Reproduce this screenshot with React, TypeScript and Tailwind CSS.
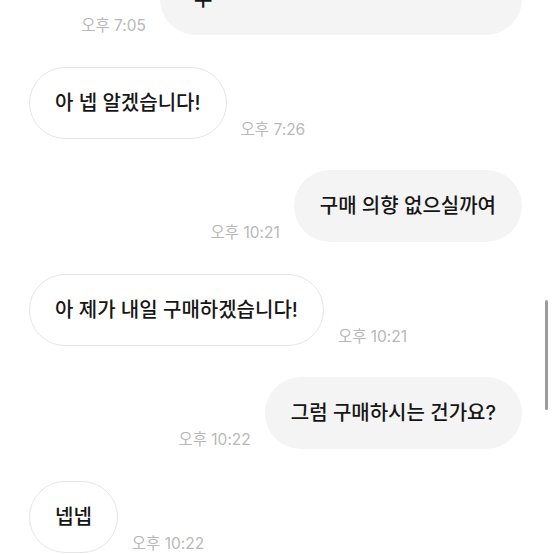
import React from "react";

// ---------------------------------------------------------------------------
// TYPES
// ---------------------------------------------------------------------------
interface Message {
  id: number;
  mine: boolean;
  lines: string[];
  time: string;
  width?: string;
}

// ---------------------------------------------------------------------------
// DATA
// ---------------------------------------------------------------------------
const MESSAGES: Message[] = [
  { id: 1, mine: true, lines: ["혹시 구매 생각 있으시면", "부"], time: "오후 7:05", width: "w-[362px]" },
  { id: 2, mine: false, lines: ["아 넵 알겠습니다!"], time: "오후 7:26" },
  { id: 3, mine: true, lines: ["구매 의향 없으실까여"], time: "오후 10:21" },
  { id: 4, mine: false, lines: ["아 제가 내일 구매하겠습니다!"], time: "오후 10:21" },
  { id: 5, mine: true, lines: ["그럼 구매하시는 건가요?"], time: "오후 10:22" },
  { id: 6, mine: false, lines: ["넵넵"], time: "오후 10:22" },
];

// Inter for digits / punctuation, Noto CJK for hangul
const FONT = "font-['Inter','Noto_Sans_CJK_KR',sans-serif]";

// ---------------------------------------------------------------------------
// COMPONENTS
// ---------------------------------------------------------------------------
const Time: React.FC<{ time: string }> = ({ time }) => (
  <span className="mb-[-1px] shrink-0 text-[15.5px] leading-[20px] text-[#b8b8b8] whitespace-nowrap">
    {time}
  </span>
);

const Bubble: React.FC<{ msg: Message }> = ({ msg }) => {
  const bubbleClass = msg.mine
    ? "bg-[#f4f4f4] rounded-[36px] px-[26px] py-[23px]"
    : "bg-white border border-[#e6e6e6] rounded-[36px] px-[25px] py-[22px]";

  return (
    <div className={`flex items-end gap-[14px] ${msg.mine ? "justify-end pr-[32px]" : "justify-start pl-[29px]"}`}>
      {msg.mine && <Time time={msg.time} />}
      <div
        className={`${bubbleClass} ${msg.width ?? ""} min-h-[72px] text-[20px] font-medium leading-[26px] text-[#161616] whitespace-pre`}
      >
        {msg.lines.map((l, i) => (
          <div key={i} className={i > 0 ? "pl-[8px]" : ""}>
            {l}
          </div>
        ))}
      </div>
      {!msg.mine && <Time time={msg.time} />}
    </div>
  );
};

// ---------------------------------------------------------------------------
// APP
// ---------------------------------------------------------------------------
export default function App() {
  return (
    <main className={`relative h-[554px] w-[554px] overflow-hidden bg-white ${FONT}`}>
      <div className="mt-[-63px] flex flex-col gap-[31.5px]">
        {MESSAGES.map((m) => (
          <Bubble key={m.id} msg={m} />
        ))}
      </div>

      {/* scrollbar thumb */}
      <div className="absolute right-[6px] top-[300px] h-[110px] w-[3px] rounded-full bg-[#9c9c9c]" />
    </main>
  );
}
